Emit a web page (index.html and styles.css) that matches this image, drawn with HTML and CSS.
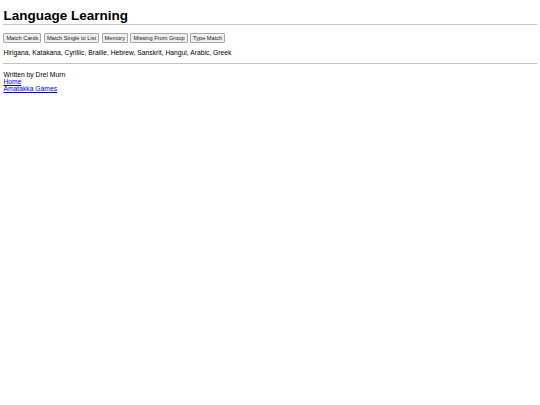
FILE: index.html
```html
<!DOCTYPE html>
<html>
<head>
<meta charset="utf-8">
<title>Language Learning</title>
<link rel="stylesheet" href="styles.css">
</head>
<body>
<h1 class="title">Language Learning</h1>
<div class="games">
<button class="game-btn">Match Cards</button>
<button class="game-btn">Match Single to List</button>
<button class="game-btn">Memory</button>
<button class="game-btn">Missing From Group</button>
<button class="game-btn">Type Match</button>
</div>
<p class="scripts">Hirigana, Katakana, Cyrillic, Braille, Hebrew, Sanskrit, Hangul, Arabic, Greek</p>
<hr class="divider">
<p class="footer">Written by Drel Murn<br><a href="#">Home</a><br><a href="#">Amatakka Games</a></p>
</body>
</html>
```

FILE: styles.css
```css
body {
  margin: 0;
  padding: 0 3.4px;
  font-family: "Liberation Sans", Arial, sans-serif;
  font-size: 6.75px;
  line-height: 7.8px;
  color: #000;
  background: #fff;
}
.title {
  font-size: 13.5px;
  line-height: 15.6px;
  font-weight: bold;
  margin: 8.4px 0 8px;
  padding: 0;
  border-bottom: 1px solid #c8c8c8;
}
.games {
  display: flex;
  gap: 2.5px;
  align-items: flex-start;
}
.game-btn {
  font-family: "Liberation Sans", Arial, sans-serif;
  font-size: 5.65px;
  line-height: 6.5px;
  background: #efefef;
  border: 1px solid #a8a8a8;
  border-radius: 1px;
  padding: 1px 2px;
  margin: 0;
  color: #222;
}
.scripts {
  margin: 5.6px 0 6px;
}
.divider {
  margin: 0;
  height: 0;
  border: 0;
  border-top: 1px solid #c4c4c4;
}
.footer {
  margin: 7px 0;
  line-height: 7.2px;
}
.footer a {
  color: #0000ee;
}
```
